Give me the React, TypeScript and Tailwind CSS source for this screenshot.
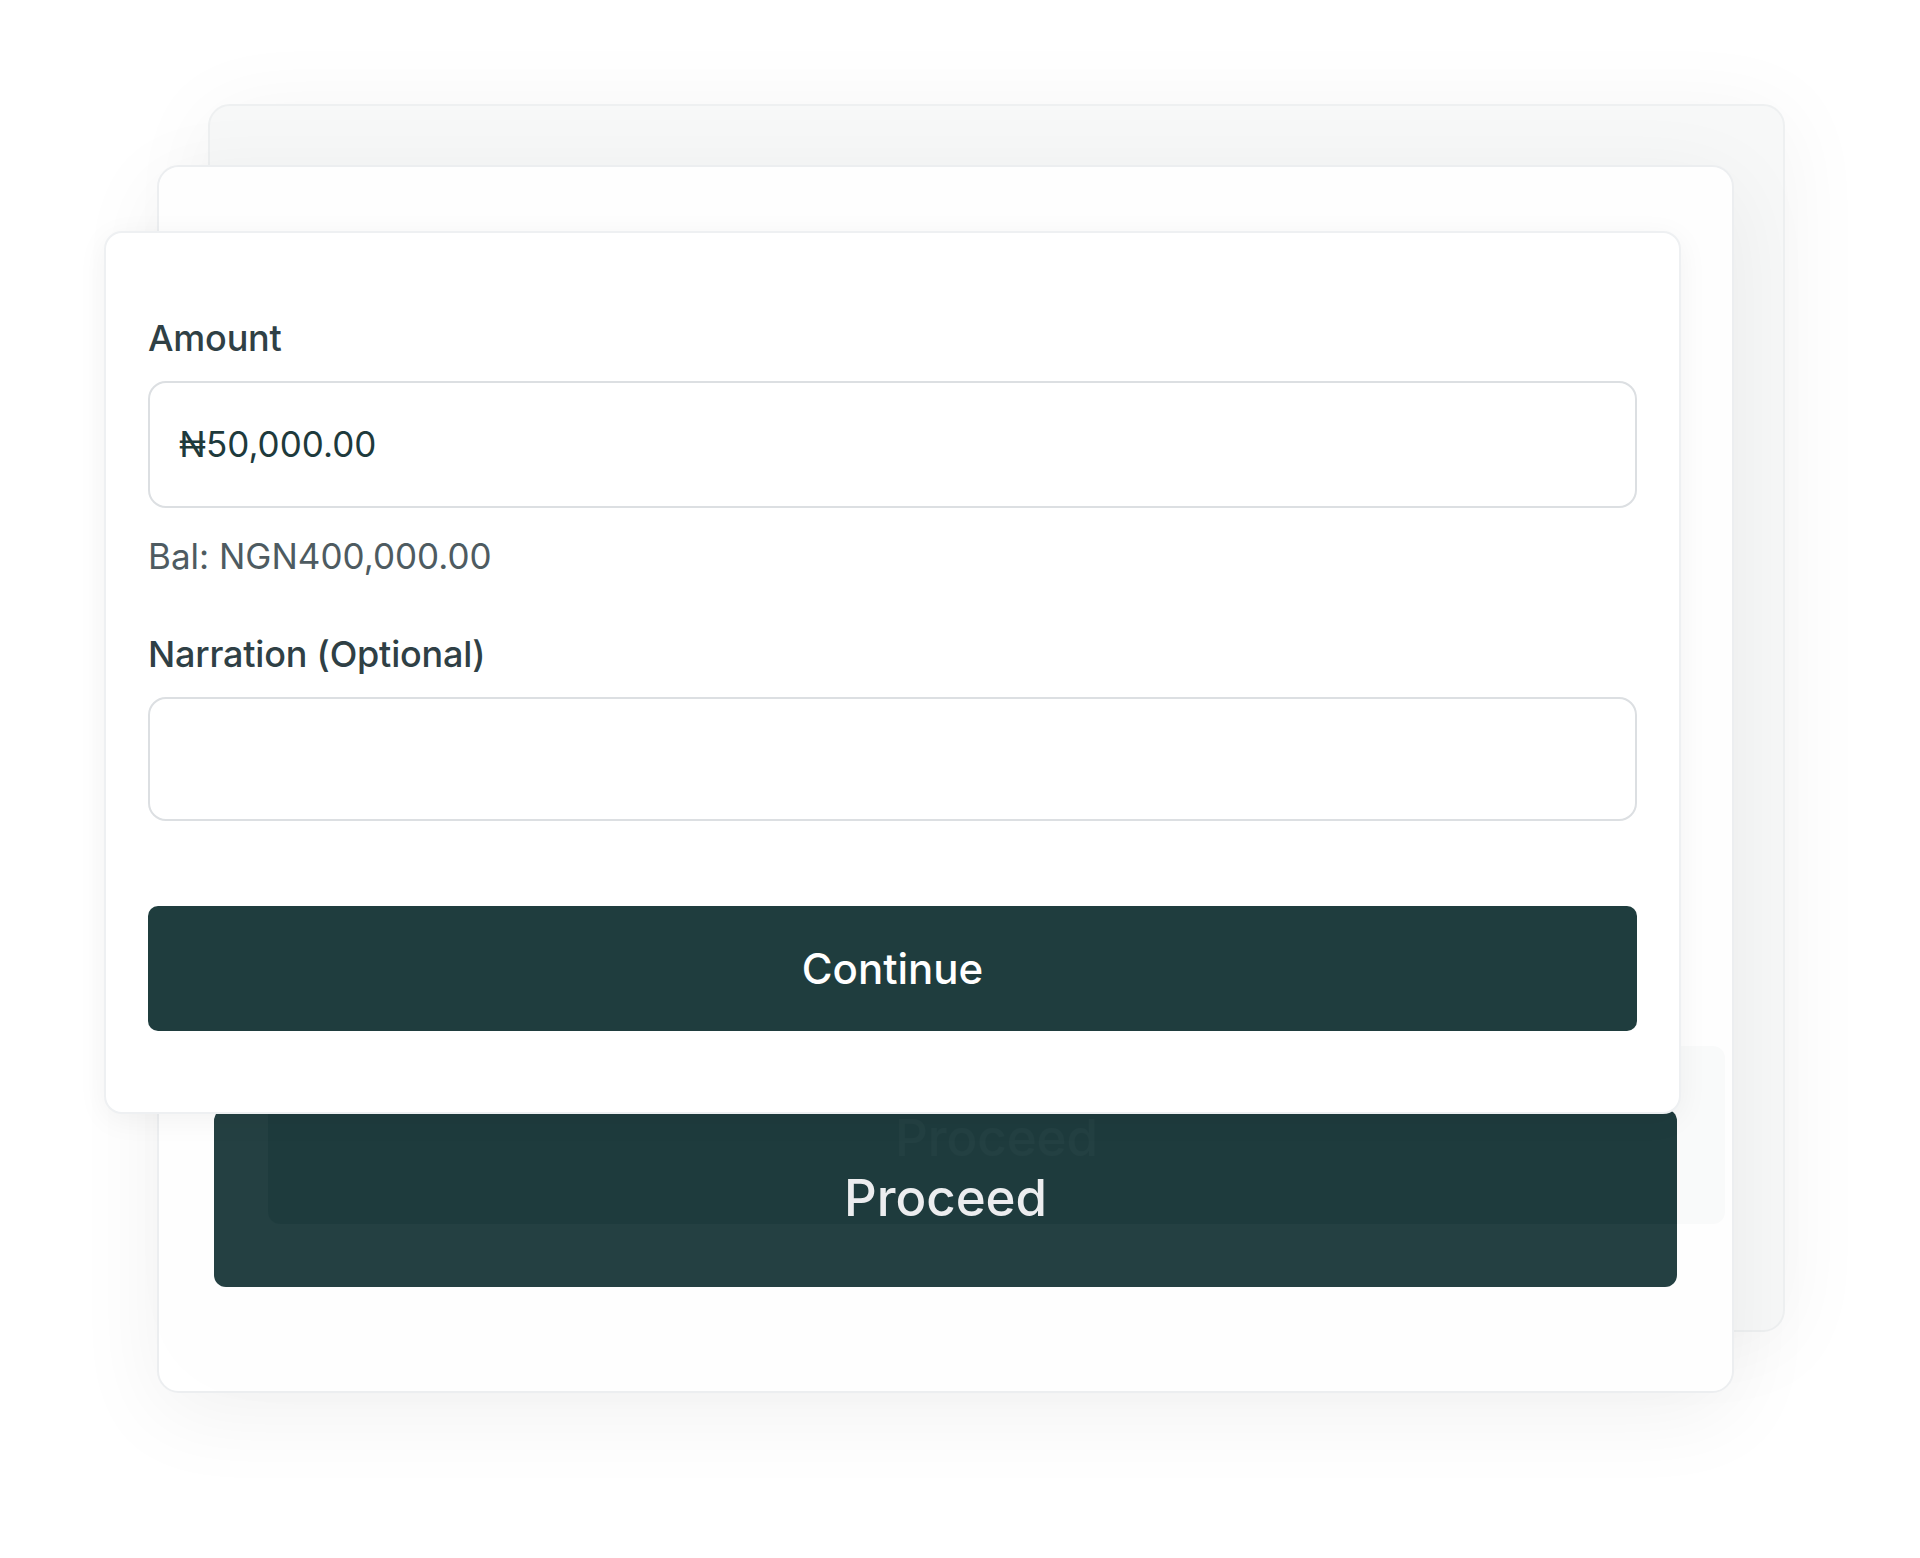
import React from 'react';

// Stacked transfer cards: two faded "Proceed" steps behind the active amount form.

function Field({ label, children }: { label: string; children?: React.ReactNode }) {
  return (
    <div className="flex flex-col gap-[21px]">
      <label className="text-[36px] leading-[43px] font-medium text-[#2f4045] tracking-[-0.2px]">{label}</label>
      {children}
    </div>
  );
}

export default function App() {
  return (
    <div className="min-h-[1558px] w-full bg-white font-['Inter','Noto_Sans',sans-serif]">
      <div className="grid pl-[104px] pt-[104px]">
        {/* Back card */}
        <div className="relative col-start-1 row-start-1 self-start ml-[104px] flex h-[1228px] w-[1577px] flex-col justify-end rounded-[22px] border-2 border-[#eef0f1] bg-[#f7f8f8] px-[58px] pb-[106px] shadow-[0_10px_90px_rgba(0,0,0,0.05)]">
          <div className="flex h-[178px] items-center justify-center rounded-[12px] bg-[#1c383a] pt-[6px]">
            <span className="text-[51px] font-medium text-[#f1f2f4]">Proceed</span>
          </div>
        </div>

        {/* Middle card */}
        <div className="relative col-start-1 row-start-1 self-start ml-[53px] mt-[61px] flex h-[1228px] w-[1577px] flex-col justify-end rounded-[22px] border-2 border-[#eceef0] bg-white px-[55px] pb-[104px] opacity-[0.975] shadow-[0_20px_90px_rgba(0,0,0,0.06)]">
          <div className="flex h-[178px] items-center justify-center rounded-[12px] bg-[#1f3c3e]">
            <span className="text-[51px] font-medium text-[#f1f2f4]">Proceed</span>
          </div>
        </div>

        {/* Front card */}
        <div className="relative col-start-1 row-start-1 self-start mt-[127px] flex w-[1577px] flex-col rounded-[18px] border-2 border-[#eef0f2] bg-white px-[42px] pt-[84px] pb-[81px] shadow-[0_6px_30px_rgba(0,0,0,0.05)]">
          <Field label="Amount">
            <div className="flex h-[127px] items-center rounded-[18px] border-2 border-[#dcdfe2] pl-[29px]">
              <span className="text-[35px] text-[#1e3a3c]">₦50,000.00</span>
            </div>
          </Field>
          <p className="mt-[27px] text-[35px] leading-[42px] text-[#4e5b61]">Bal: NGN400,000.00</p>
          <div className="mt-[56px]">
            <Field label="Narration (Optional)">
              <div className="h-[124px] rounded-[18px] border-2 border-[#dcdfe2]" />
            </Field>
          </div>
          <button
            type="button"
            className="mt-[85px] flex h-[125px] items-center justify-center rounded-[10px] bg-[#1f3d3e] text-[42px] font-medium text-white"
          >
            Continue
          </button>
        </div>
      </div>
    </div>
  );
}
